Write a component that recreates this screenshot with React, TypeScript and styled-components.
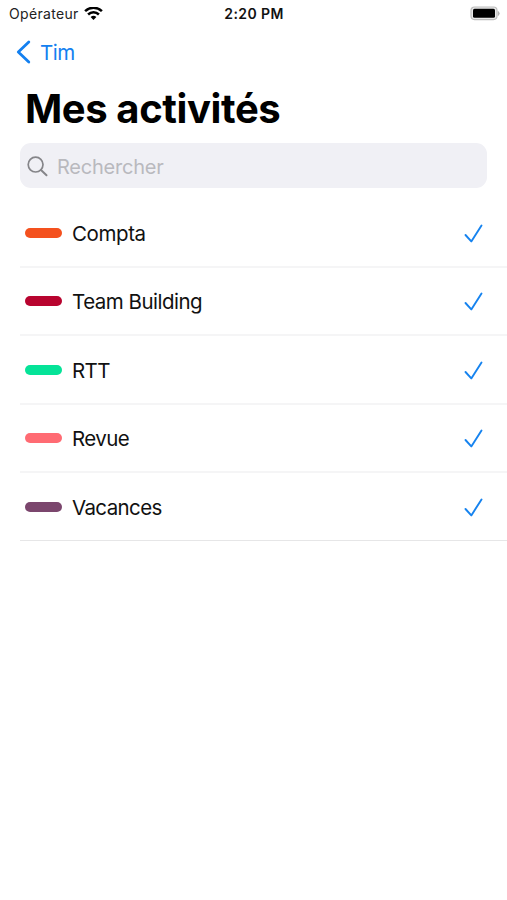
import React from 'react';
import styled, { createGlobalStyle } from 'styled-components';

const GlobalStyle = createGlobalStyle`
  * { box-sizing: border-box; }
  body { margin: 0; background: #fff; }
`;

const Screen = styled.main`
  width: 507px;
  height: 900px;
  overflow: hidden;
  background: #fff;
  color: #000;
  font-family: Inter, 'Liberation Sans', sans-serif;
`;

const StatusBar = styled.header`
  display: grid;
  grid-template-columns: 1fr auto 1fr;
  align-items: center;
  height: 27px;
  padding: 0 6px 0 9px;
`;

const Carrier = styled.div`
  display: flex;
  align-items: center;
  gap: 5px;
  font-size: 14px;
  letter-spacing: 0.33px;
  color: #222;
`;

const Clock = styled.div`
  margin-right: 2px;
  font-size: 14px;
  font-weight: 600;
  letter-spacing: 0.4px;
  color: #111;
`;

const Battery = styled.svg`
  justify-self: end;
`;

const BackButton = styled.button`
  display: flex;
  align-items: center;
  gap: 9px;
  height: 50px;
  padding: 1px 0 0 16px;
  border: 0;
  background: none;
  color: #1380f0;
  font: 400 20.5px/24px Inter, 'Liberation Sans', sans-serif;
  letter-spacing: -0.5px;
`;

const BackChevron = styled.svg`
  margin-bottom: 2px;
`;

const Title = styled.h1`
  margin: 7px 0 0 25px;
  height: 50px;
  font-size: 40px;
  font-weight: 700;
  line-height: 50px;
  letter-spacing: -0.4px;
  white-space: nowrap;
`;

const SearchField = styled.div`
  display: flex;
  align-items: center;
  gap: 9px;
  height: 45px;
  margin: 9px 20px 0;
  padding: 2px 7px 0;
  border-radius: 11px;
  background: #f0f0f5;
  color: #b9b9be;
  font-size: 20px;
  letter-spacing: -0.22px;
`;

const SearchIcon = styled.svg`
  margin-bottom: 1px;
`;

const List = styled.ul`
  list-style: none;
  margin: 11.6px 0 0 20px;
  padding: 0;
`;

const Row = styled.li`
  display: flex;
  align-items: center;
  height: 68.4px;
  padding: 1px 24px 0 5px;
  border-bottom: 2px solid #f5f5f6;

  &:last-child {
    height: 68px;
    border-bottom: 1px solid #e6e6e7;
  }
`;

const Swatch = styled.span<{ $color: string }>`
  width: 37px;
  height: 10px;
  margin: 0 10px 1px 0;
  border-radius: 5px;
  background: ${({ $color }) => $color};
`;

const Label = styled.span<{ $tracking: number }>`
  flex: 1;
  font-size: 20.5px;
  letter-spacing: ${({ $tracking }) => $tracking}px;
  color: #111;
`;

const activities = [
  { name: 'Compta', color: '#f4511e', tracking: -0.4 },
  { name: 'Team Building', color: '#b8042f', tracking: -0.5 },
  { name: 'RTT', color: '#05e398', tracking: -0.6 },
  { name: 'Revue', color: '#ff6b73', tracking: -0.6 },
  { name: 'Vacances', color: '#7b466d', tracking: -0.62 },
];

export default function App() {
  return (
    <Screen>
      <GlobalStyle />
      <StatusBar>
        <Carrier>
          Opérateur
          <svg width="19" height="14" viewBox="0 0 19 14" fill="none" stroke="#000" strokeWidth="2.5">
            <path d="M1.1 4.2a12 12 0 0 1 16.8 0" />
            <path d="M4.1 7.5a7.7 7.7 0 0 1 10.8 0" />
            <path d="M9.5 13 6.6 10.1a4.1 4.1 0 0 1 5.8 0Z" fill="#000" stroke="none" />
          </svg>
        </Carrier>
        <Clock>2:20 PM</Clock>
        <Battery width="31" height="15" viewBox="0 0 31 15">
          <rect x="1" y="1" width="26" height="12.6" rx="3.5" fill="#e9e9e9" stroke="#bdbdbd" strokeWidth="1.2" />
          <rect x="3" y="2.7" width="22" height="9" rx="1.5" fill="#000" />
          <path d="M28.3 5.5q2 2 0 4Z" fill="#aaa" stroke="#aaa" strokeWidth=".7" />
        </Battery>
      </StatusBar>
      <BackButton type="button">
        <BackChevron width="15" height="24" viewBox="0 0 15 24" fill="none" stroke="#1380f0" strokeWidth="2.8" strokeLinecap="round" strokeLinejoin="round">
          <path d="M12.8 2 2.3 12l10.5 10" />
        </BackChevron>
        Tim
      </BackButton>
      <Title>Mes activités</Title>
      <SearchField>
        <SearchIcon width="21" height="21" viewBox="0 0 21 21" fill="none" stroke="#858589" strokeWidth="1.7" strokeLinecap="round">
          <circle cx="8.6" cy="8.6" r="7.4" />
          <path d="m14 14 5.5 5.3" strokeWidth="2" />
        </SearchIcon>
        Rechercher
      </SearchField>
      <List>
        {activities.map(({ name, color, tracking }) => (
          <Row key={name}>
            <Swatch $color={color} />
            <Label $tracking={tracking}>{name}</Label>
            <svg width="19" height="19" viewBox="0 0 19 19" fill="none" stroke="#1683ef" strokeWidth="1.9" strokeLinecap="round" strokeLinejoin="round">
              <path d="m1.5 11 5.8 6.4L17.5 1.5" />
            </svg>
          </Row>
        ))}
      </List>
    </Screen>
  );
}
